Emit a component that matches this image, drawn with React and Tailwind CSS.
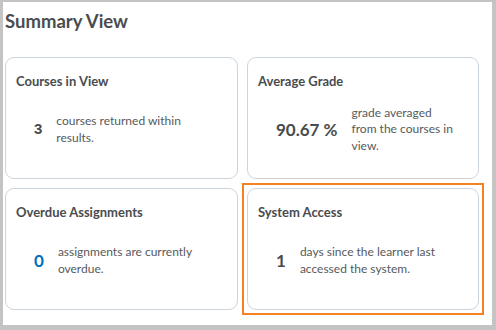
import React from "react";

const cards = [
  {
    title: "Courses in View",
    value: "3",
    valueClass: "font-['Liberation_Sans',sans-serif] text-[15px] text-[#494c4e]",
    lines: ["courses returned within", "results."],
  },
  {
    title: "Average Grade",
    value: "90.67 %",
    valueClass: "text-[17px] text-[#494c4e]",
    lines: ["grade averaged", "from the courses in", "view."],
  },
  {
    title: "Overdue Assignments",
    value: "0",
    valueClass: "text-[17px] text-[#006fbf]",
    lines: ["assignments are currently", "overdue."],
  },
  {
    title: "System Access",
    value: "1",
    valueClass: "text-[17px] text-[#494c4e]",
    lines: ["days since the learner last", "accessed the system."],
    focused: true,
  },
];

const Card = ({ title, value, valueClass, lines, focused }) => (
  <div className="relative">
    {focused && <span className="pointer-events-none absolute -inset-[5px] border-2 border-[#f58220]" />}
    <div className="flex h-[122px] flex-col rounded-[9px] border border-[#cdd5dc] bg-white px-[10px] pt-[13px] pb-[10px]">
      <div className="text-[13px] leading-[20px] font-bold text-[#494c4e]">{title}</div>
      <div className="flex flex-1 items-center pl-[18px]">
        <div className={`font-bold whitespace-nowrap ${valueClass}`}>{value}</div>
        <div className="ml-[14px] text-[12px] leading-[16.5px] text-[#565a5c]">
          {lines.map((l, i) => (
            <div key={i} className="whitespace-nowrap">
              {l}
            </div>
          ))}
        </div>
      </div>
    </div>
  </div>
);

export default function App() {
  return (
    <div className="h-[330px] w-[496px] bg-[#c4c4c4] pt-[2px] pr-[4px] pb-[5px] pl-[3px] font-['Lato',sans-serif]">
      <div className="h-full w-full bg-white pl-[2px]">
        <h1 className="pt-[6px] text-[18.5px] leading-[26px] font-bold text-[#494c4e]">Summary View</h1>
        <div className="mt-[23px] grid grid-cols-[233px_232px] gap-[9px]">
          {cards.map((c) => (
            <Card key={c.title} {...c} />
          ))}
        </div>
      </div>
    </div>
  );
}
